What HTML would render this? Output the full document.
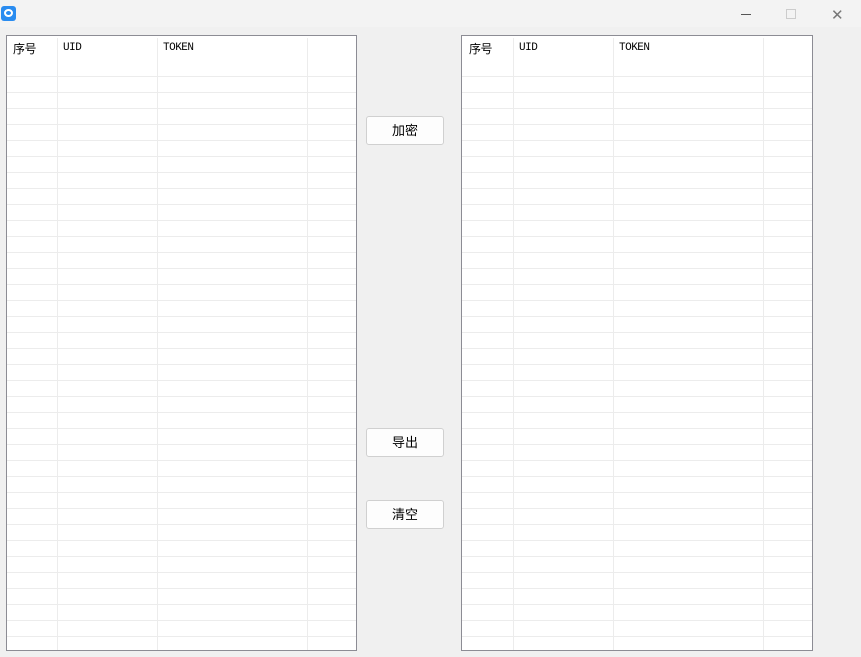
<!DOCTYPE html>
<html><head><meta charset="utf-8"><style>
*{margin:0;padding:0;box-sizing:border-box}
body{width:861px;height:657px;background:#f0f0f0;position:relative;overflow:hidden;font-family:"Liberation Mono","Noto Sans CJK SC",monospace}
.title{position:absolute;left:0;top:0;width:861px;height:27px;background:#f3f3f3}
.tbl{position:absolute;top:35px;width:351px;height:616px;border:1px solid #8c8c94;background:#fff;
background-image:repeating-linear-gradient(to bottom,transparent 0,transparent 15px,#ececec 15px,#ececec 16px);
background-position:0 25px;background-repeat:repeat-x;background-size:100% 592px}
.tbl .hd{position:absolute;left:0;top:0;right:0;height:24px;background:#fff}
.v{position:absolute;top:2px;bottom:0;width:1px;background:#ececec}
.h{position:absolute;top:6px;font-size:11px;color:#000;letter-spacing:-0.5px}
.btn{position:absolute;left:366px;width:78px;height:29px;border:1px solid #d0d0d0;border-radius:3px;background:#fdfdfd;font-size:13px;text-align:center;line-height:27px;font-family:"Liberation Sans","Noto Sans CJK SC",sans-serif}
</style></head><body>
<div class="title">
<div style="position:absolute;left:1px;top:6px;width:15px;height:15px;background:#2a8cf0;border-radius:3px"><div style="position:absolute;left:3px;top:3px;width:9px;height:8px;border:2px solid #fff;border-radius:50%"></div></div>
<div style="position:absolute;left:741px;top:14px;width:10px;height:1px;background:#555"></div>
<div style="position:absolute;left:786px;top:9px;width:10px;height:10px;border:1px solid #ccc"></div>
<div style="position:absolute;left:831px;top:6px;font-size:15px;color:#777;font-family:'DejaVu Sans'">✕</div>
</div>
<div class="tbl" style="left:6px">
<div class="hd"></div>
<div class="v" style="left:50px"></div><div class="v" style="left:150px"></div><div class="v" style="left:300px"></div>
<div class="h" style="left:6px;font-size:12px;top:4px;font-family:'Liberation Sans','Noto Sans CJK SC',sans-serif">序号</div>
<div class="h" style="left:56px">UID</div><div class="h" style="left:156px">TOKEN</div>
</div>
<div class="tbl" style="left:461px;width:352px">
<div class="hd"></div>
<div class="v" style="left:51px"></div><div class="v" style="left:151px"></div><div class="v" style="left:301px"></div>
<div class="h" style="left:7px;font-size:12px;top:4px;font-family:'Liberation Sans','Noto Sans CJK SC',sans-serif">序号</div>
<div class="h" style="left:57px">UID</div><div class="h" style="left:157px">TOKEN</div>
</div>
<div class="btn" style="top:116px">加密</div>
<div class="btn" style="top:428px">导出</div>
<div class="btn" style="top:500px">清空</div>
</body></html>
